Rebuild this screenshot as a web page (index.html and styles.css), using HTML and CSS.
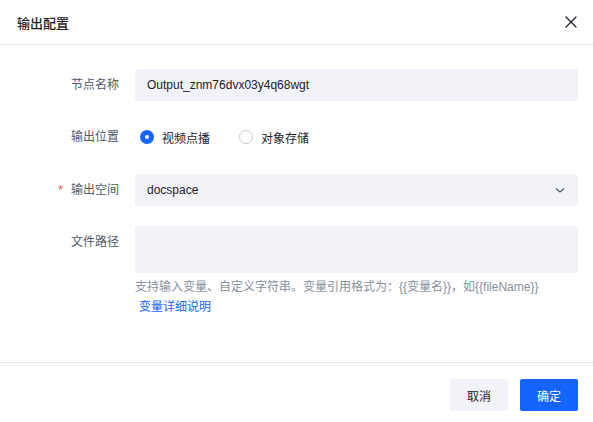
FILE: index.html
```html
<!DOCTYPE html>
<html lang="zh">
<head>
<meta charset="utf-8">
<link rel="stylesheet" href="styles.css">
</head>
<body>
<div class="modal">
  <div class="header">
    <div class="title">输出配置</div>
    <button class="close" aria-label="close">
      <svg width="12" height="12" viewBox="0 0 12 12"><path d="M1 1L11 11M11 1L1 11" stroke="#1d2129" stroke-width="1.3" fill="none" stroke-linecap="round"/></svg>
    </button>
  </div>
  <div class="body">
    <div class="row">
      <div class="label">节点名称</div>
      <div class="control"><div class="input">Output_znm76dvx03y4q68wgt</div></div>
    </div>
    <div class="row radio-row">
      <div class="label">输出位置</div>
      <div class="control radios">
        <label class="radio checked"><span class="dot"></span>视频点播</label>
        <label class="radio"><span class="dot"></span>对象存储</label>
      </div>
    </div>
    <div class="row">
      <div class="label"><span class="req">*</span>输出空间</div>
      <div class="control">
        <div class="input select">docspace
          <svg width="12" height="12" viewBox="0 0 12 12"><path d="M2 4.5L6 8L10 4.5" stroke="#4e5969" stroke-width="1.2" fill="none"/></svg>
        </div>
      </div>
    </div>
    <div class="row last">
      <div class="label">文件路径</div>
      <div class="control">
        <div class="textarea"></div>
        <div class="help">支持输入变量、自定义字符串。变量引用格式为：{{变量名}}，如{{fileName}}</div>
        <a class="link">变量详细说明</a>
      </div>
    </div>
  </div>
  <div class="footer">
    <button class="btn">取消</button>
    <button class="btn primary">确定</button>
  </div>
</div>
</body>
</html>
```
FILE: styles.css
```css
* { box-sizing: border-box; }
html, body { margin: 0; padding: 0; background: #fff; }
body {
  font-family: "Liberation Sans", "Noto Sans CJK SC", sans-serif;
  font-size: 12px;
  color: #1d2129;
  width: 593px;
  height: 422px;
}
.modal { display: flex; flex-direction: column; height: 422px; }
.header {
  height: 45px;
  border-bottom: 1px solid #e5e6eb;
  display: flex;
  align-items: center;
  justify-content: space-between;
  padding: 0 15px 0 17px;
}
.title { font-size: 13px; font-weight: 500; color: #1d2129; }
.close {
  border: 0; background: none; padding: 0; width: 14px; height: 14px;
  display: flex; align-items: center; justify-content: center;
}
.body { padding: 24px 15px 0 0; flex: 1; }
.row {
  display: grid;
  grid-template-columns: 119px 1fr;
  column-gap: 16px;
  margin-bottom: 20px;
}
.radio-row { margin-bottom: 21px; }
.label {
  text-align: right;
  color: #4e5969;
  height: 32px;
  line-height: 32px;
}
.req { color: #f53f3f; margin-right: 8px; }
.input {
  height: 32px;
  background: #f2f3f8;
  border-radius: 2px;
  padding: 0 12px;
  display: flex;
  align-items: center;
  color: #1d2129;
}
.select { justify-content: space-between; }
.radios { display: flex; align-items: center; height: 32px; }
.radio {
  display: flex; align-items: center; color: #1d2129;
  margin-right: 29px;
  margin-left: 5px;
}
.radio + .radio { margin-left: 0; }
.dot {
  width: 14px; height: 14px; border-radius: 50%;
  border: 1.5px solid #c9cdd4;
  margin-right: 8px;
  background: #fff;
}
.radio.checked .dot {
  border: 5px solid #1664ff;
  background: #fff;
}
.textarea {
  height: 47px;
  background: #f2f3f8;
  border-radius: 2px;
}
.help {
  font-size: 12px;
  color: #86909c;
  margin-top: 6px;
  line-height: 16px;
}
.link {
  display: block;
  font-size: 12px;
  color: #1664ff;
  margin-top: 4px;
  margin-left: 4px;
  line-height: 16px;
}
.footer {
  border-top: 1px solid #e5e6eb;
  height: 60px;
  display: flex;
  justify-content: flex-end;
  align-items: flex-start;
  padding: 16px 15px 0 0;
  gap: 12px;
}
.btn {
  font-family: inherit;
  font-size: 12px;
  height: 32px;
  width: 58px;
  border: 0;
  border-radius: 2px;
  background: #f2f3f8;
  color: #1d2129;
}
.btn.primary { background: #1664ff; color: #fff; }
```
